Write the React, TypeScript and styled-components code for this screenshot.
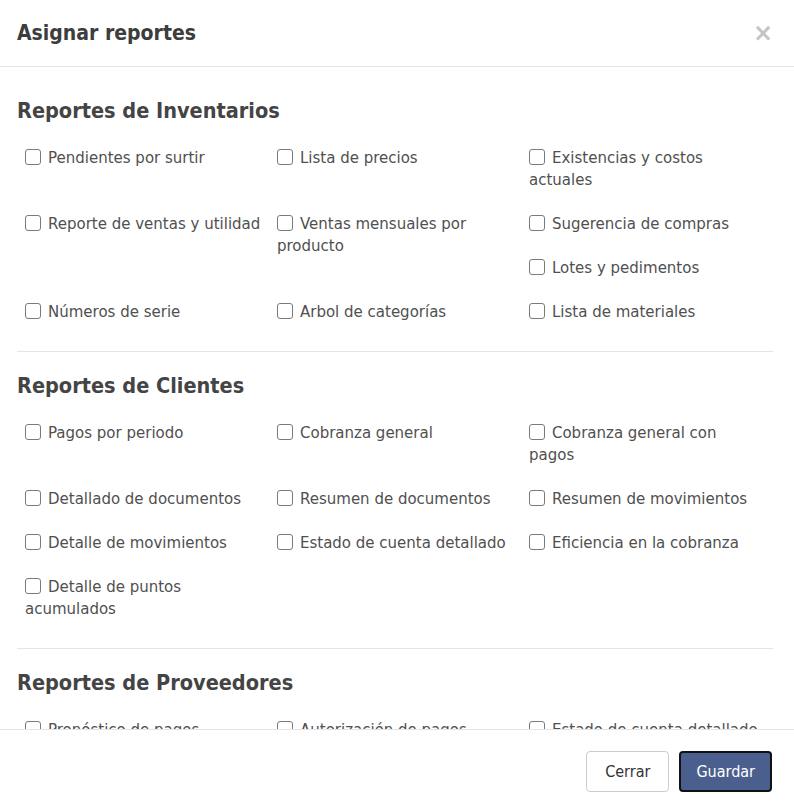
import React from "react"
import styled, { createGlobalStyle } from "styled-components"

const GlobalStyle = createGlobalStyle`
  html, body {
    margin: 0;
    padding: 0;
    height: 100%;
    background: #ffffff;
  }
  #root {
    height: 100%;
  }
  * {
    box-sizing: border-box;
  }
`

const SECTIONS = [
  {
    title: "Reportes de Inventarios",
    items: [
      "Pendientes por surtir",
      "Lista de precios",
      "Existencias y costos actuales",
      "Reporte de ventas y utilidad",
      "Ventas mensuales por producto",
      "Sugerencia de compras",
      "Lotes y pedimentos",
      "Números de serie",
      "Arbol de categorías",
      "Lista de materiales",
    ],
  },
  {
    title: "Reportes de Clientes",
    items: [
      "Pagos por periodo",
      "Cobranza general",
      "Cobranza general con pagos",
      "Detallado de documentos",
      "Resumen de documentos",
      "Resumen de movimientos",
      "Detalle de movimientos",
      "Estado de cuenta detallado",
      "Eficiencia en la cobranza",
      "Detalle de puntos acumulados",
    ],
  },
  {
    title: "Reportes de Proveedores",
    items: [
      "Pronóstico de pagos",
      "Autorización de pagos",
      "Estado de cuenta detallado",
      "Antigüedad de saldos",
      "Pagos por periodo",
      "Resumen de movimientos",
    ],
  },
]

const Modal = styled.div`
  display: flex;
  flex-direction: column;
  height: 100vh;
  font-family: "DejaVu Sans", sans-serif;
  color: #444;
`

const Header = styled.div`
  display: flex;
  align-items: center;
  justify-content: space-between;
  height: 67px;
  padding: 0 17px;
  border-bottom: 1px solid #e5e5e5;
  flex-shrink: 0;
`

const Title = styled.h4`
  margin: 0;
  font-family: "DejaVu Sans Condensed", "DejaVu Sans", sans-serif;
  font-size: 21px;
  font-weight: bold;
  color: #3d3d3d;
`

const Close = styled.button`
  border: none;
  background: none;
  padding: 0;
  margin-right: 4px;
  font-family: "DejaVu Sans", sans-serif;
  font-size: 24px;
  font-weight: bold;
  line-height: 1;
  color: #c4c4c4;
  cursor: pointer;
`

const Body = styled.div`
  flex: 1;
  overflow: hidden;
  padding: 10px 21px 0 17px;
`

const Section = styled.section`
  padding-top: 22px;
  border-bottom: 1px solid #e5e5e5;
  &:last-child {
    border-bottom: none;
  }
`

const SectionTitle = styled.h3`
  margin: 0 0 24px;
  font-family: "DejaVu Sans Condensed", "DejaVu Sans", sans-serif;
  font-size: 21.5px;
  line-height: 24px;
  font-weight: bold;
  color: #444;
`

const Items = styled.div`
  display: flow-root;
  padding-bottom: 6px;
`

const Item = styled.label`
  float: left;
  width: 33.3333%;
  padding: 0 8px;
  margin-bottom: 22px;
  font-size: 15px;
  line-height: 22px;
  color: #505050;
`

const Box = styled.input`
  appearance: none;
  width: 16px;
  height: 16px;
  margin: 0 7px 0 0;
  border: 1px solid #7a7a7a;
  border-radius: 3px;
  background: #fff;
  vertical-align: -2px;
`

const Footer = styled.div`
  display: flex;
  justify-content: flex-end;
  gap: 10px;
  padding: 21px 22px 16px;
  border-top: 1px solid #e5e5e5;
  flex-shrink: 0;
`

const Button = styled.button<{ $primary?: boolean }>`
  height: 41px;
  padding: 0 ${p => (p.$primary ? "15px" : "18px")};
  font-family: "DejaVu Sans Condensed", "DejaVu Sans", sans-serif;
  font-size: 16px;
  border-radius: 4px;
  cursor: pointer;
  color: ${p => (p.$primary ? "#fff" : "#333")};
  background: ${p => (p.$primary ? "#4b5f8e" : "#fff")};
  border: ${p => (p.$primary ? "2px solid #111" : "1px solid #ccc")};
`

export default function App() {
  return (
    <>
      <GlobalStyle />
      <Modal>
        <Header>
          <Title>Asignar reportes</Title>
          <Close aria-label="Cerrar">×</Close>
        </Header>
        <Body>
          {SECTIONS.map(s => (
            <Section key={s.title}>
              <SectionTitle>{s.title}</SectionTitle>
              <Items>
                {s.items.map(i => (
                  <Item key={i}>
                    <Box type="checkbox" />
                    {i}
                  </Item>
                ))}
              </Items>
            </Section>
          ))}
        </Body>
        <Footer>
          <Button>Cerrar</Button>
          <Button $primary>Guardar</Button>
        </Footer>
      </Modal>
    </>
  )
}
